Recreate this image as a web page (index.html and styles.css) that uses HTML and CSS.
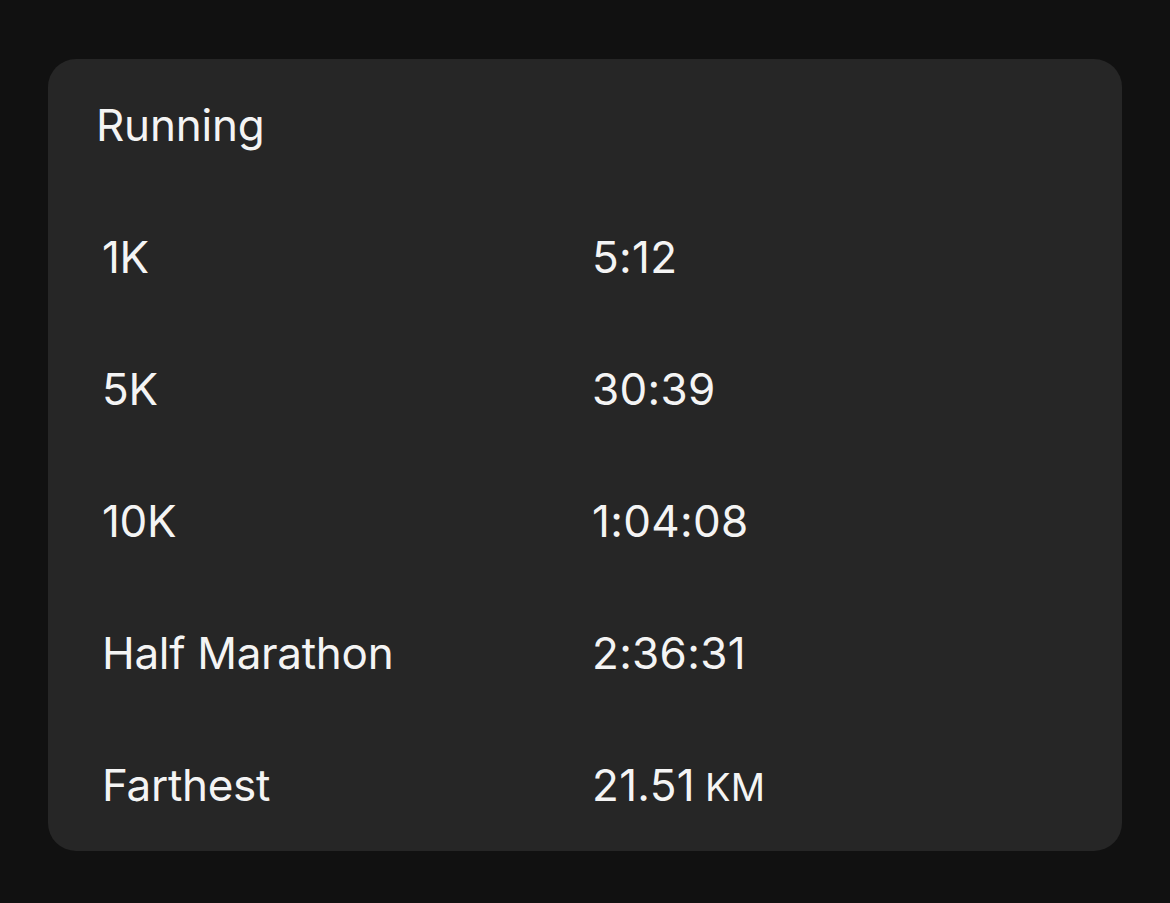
FILE: index.html
```html
<!DOCTYPE html>
<html lang="en">
<head>
<meta charset="utf-8">
<title>Running</title>
<link rel="stylesheet" href="styles.css">
</head>
<body>
<section class="card">
  <h2 class="card-title">Running</h2>
  <div class="rows">
    <div class="row"><span class="label">1K</span><span class="value">5:12</span></div>
    <div class="row"><span class="label">5K</span><span class="value">30:39</span></div>
    <div class="row"><span class="label">10K</span><span class="value">1:04:08</span></div>
    <div class="row"><span class="label">Half Marathon</span><span class="value">2:36:31</span></div>
    <div class="row"><span class="label">Farthest</span><span class="value">21.51<span class="unit">KM</span></span></div>
  </div>
</section>
</body>
</html>
```
FILE: styles.css
```css
html, body {
  margin: 0;
  background: #111111;
}
body {
  padding: 59px 48px 52px;
  font-family: Inter, "Noto Sans", sans-serif;
  color: #f4f4f4;
}
.card {
  background: #262626;
  border-radius: 28px;
  padding: 39px 0 0;
}
.card-title {
  margin: 0 0 39px;
  padding-left: 48px;
  font-size: 44px;
  font-weight: 400;
  line-height: 54px;
  letter-spacing: -0.2px;
}
.row {
  display: grid;
  grid-template-columns: 490px 1fr;
  padding: 39px 0 39px 54px;
  font-size: 44px;
  line-height: 54px;
  letter-spacing: -0.3px;
}
.row:last-child {
  padding-bottom: 37px;
}
.value {
  letter-spacing: 0.3px;
}
.unit {
  font-size: 38px;
  margin-left: 10px;
}
```
